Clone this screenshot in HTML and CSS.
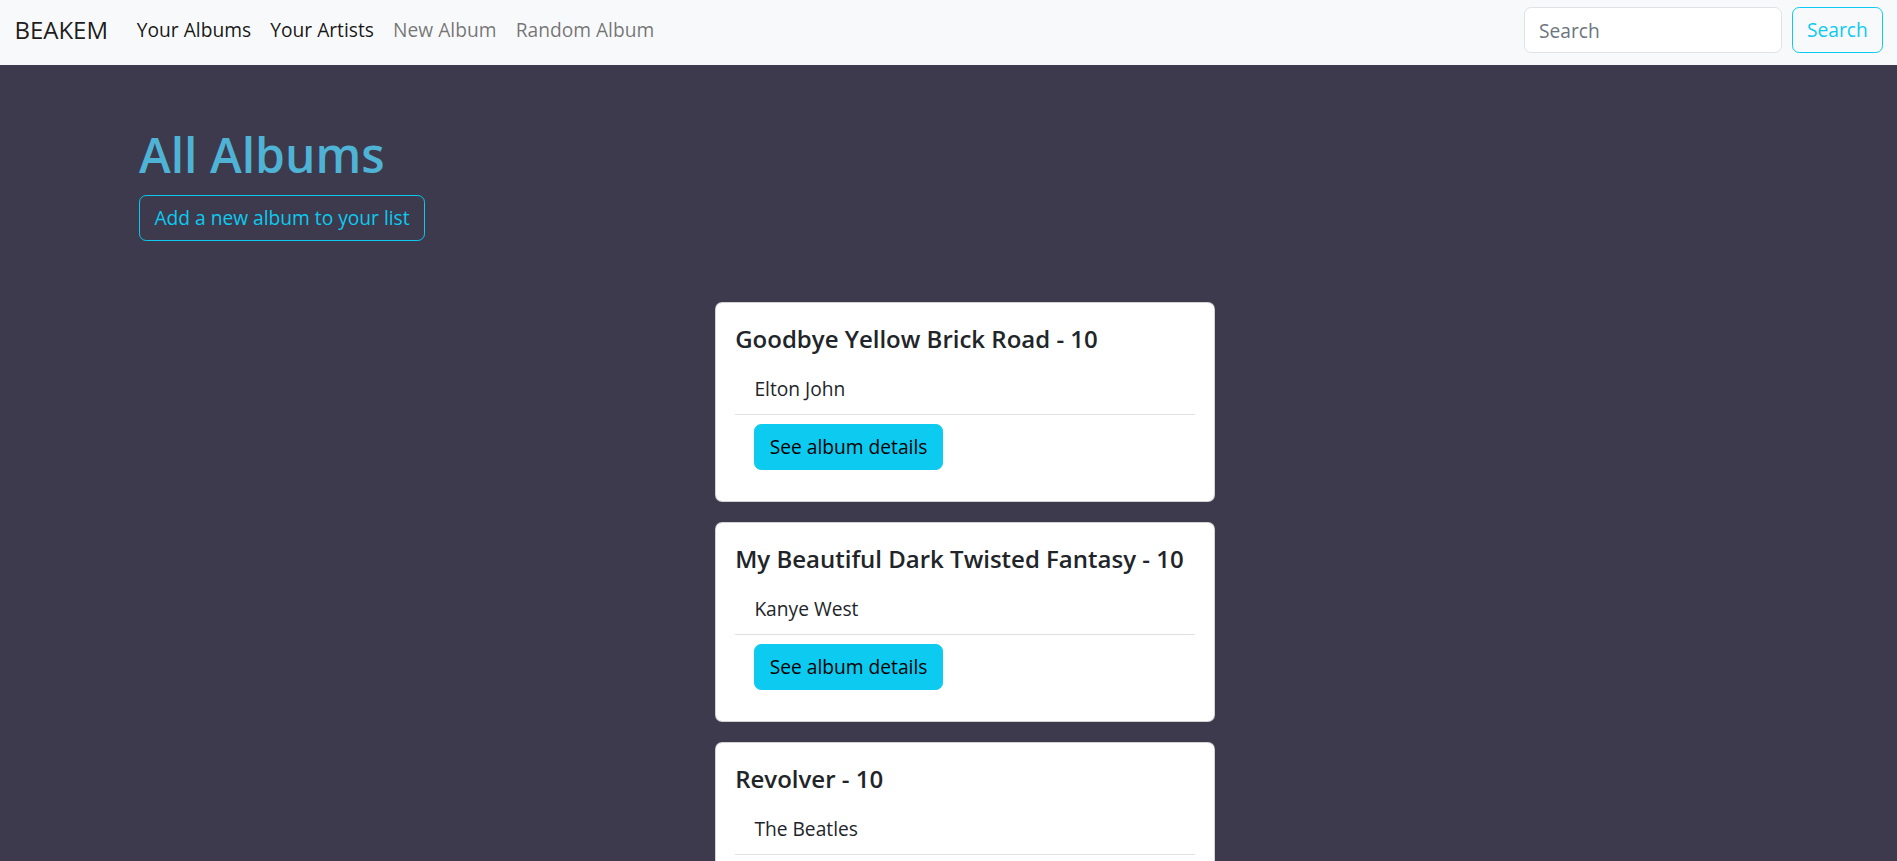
FILE: index.html
```html
<!DOCTYPE html>
<html lang="en">
<head>
<meta charset="utf-8">
<title>BEAKEM</title>
<link rel="stylesheet" href="styles.css">
</head>
<body>
<nav class="navbar">
  <div class="nav-left">
    <a class="brand" href="#">BEAKEM</a>
    <ul class="nav-links">
      <li><a class="nav-link active" href="#">Your Albums</a></li>
      <li><a class="nav-link active" href="#">Your Artists</a></li>
      <li><a class="nav-link" href="#">New Album</a></li>
      <li><a class="nav-link" href="#">Random Album</a></li>
    </ul>
  </div>
  <form class="search-form">
    <input class="search-input" type="search" placeholder="Search">
    <button class="btn-outline-info" type="button">Search</button>
  </form>
</nav>
<main class="page">
  <h1 class="page-title">All Albums</h1>
  <a class="btn-add" href="#">Add a new album to your list</a>
  <section class="album-list">
    <article class="card">
      <h5 class="card-title">Goodbye Yellow Brick Road - 10</h5>
      <ul class="list-group">
        <li class="list-item">Elton John</li>
        <li class="list-item"><a class="btn-info" href="#">See album details</a></li>
      </ul>
    </article>
    <article class="card">
      <h5 class="card-title">My Beautiful Dark Twisted Fantasy - 10</h5>
      <ul class="list-group">
        <li class="list-item">Kanye West</li>
        <li class="list-item"><a class="btn-info" href="#">See album details</a></li>
      </ul>
    </article>
    <article class="card">
      <h5 class="card-title">Revolver - 10</h5>
      <ul class="list-group">
        <li class="list-item">The Beatles</li>
        <li class="list-item"><a class="btn-info" href="#">See album details</a></li>
      </ul>
    </article>
  </section>
</main>
</body>
</html>
```
FILE: styles.css
```css
html, body {
  margin: 0;
  padding: 0;
}
body {
  font-family: "Open Sans", "Noto Sans", sans-serif;
  font-size: 19.2px;
  line-height: 28.8px;
  color: #212529;
  background: #3c3a4c;
  overflow: hidden;
}
a { text-decoration: none; }

.navbar {
  height: 65px;
  box-sizing: border-box;
  background: #f8f9fa;
  padding: 0 14.4px 4.4px;
  display: flex;
  align-items: center;
  justify-content: space-between;
}
.nav-left {
  display: flex;
  align-items: center;
}
.brand {
  font-size: 24px;
  line-height: 36px;
  color: rgba(0, 0, 0, 0.9);
  margin-right: 19.2px;
}
.nav-links {
  list-style: none;
  margin: 0;
  padding: 0;
  display: flex;
}
.nav-link {
  display: block;
  padding: 9.6px 9.6px;
  color: rgba(0, 0, 0, 0.55);
}
.nav-link.active {
  color: rgba(0, 0, 0, 0.92);
}
.search-form {
  display: flex;
  align-items: center;
  gap: 10px;
}
.search-input {
  box-sizing: border-box;
  width: 258px;
  height: 46px;
  padding: 7.2px 14.4px;
  font: inherit;
  font-size: 19.2px;
  color: #212529;
  background: #fff;
  border: 1px solid #dee2e6;
  border-radius: 7.2px;
  outline: none;
}
.search-input::placeholder {
  color: #6c757d;
}
.btn-outline-info {
  box-sizing: border-box;
  width: 91px;
  height: 46px;
  padding: 7.2px 14.4px;
  font: inherit;
  font-size: 19.2px;
  color: #0dcaf0;
  background: transparent;
  border: 1px solid #0dcaf0;
  border-radius: 7.2px;
}

.page {
  padding: 61px 0 0 139px;
}
.page-title {
  margin: 0 0 11px;
  font-size: 48px;
  line-height: 57.6px;
  font-weight: 600;
  color: #4fb3d5;
}
.btn-add {
  display: inline-block;
  box-sizing: border-box;
  height: 46px;
  padding: 8px 14.4px 7.2px;
  color: #0dcaf0;
  border: 1px solid #0dcaf0;
  border-radius: 7.2px;
}
.album-list {
  margin: 61px 0 0 576px;
  width: 500px;
  display: flex;
  flex-direction: column;
  gap: 20px;
}
.card {
  box-sizing: border-box;
  height: 200px;
  background: #fff;
  border: 1px solid rgba(0, 0, 0, 0.175);
  border-radius: 7.2px;
  padding: 22.5px 19.2px 19px;
  flex-shrink: 0;
}
.card-title {
  margin: 0 0 12px;
  font-size: 24px;
  line-height: 28.8px;
  font-weight: 600;
  color: #212529;
}
.list-group {
  list-style: none;
  margin: 0;
  padding: 0;
}
.list-item {
  padding: 9.6px 19.2px;
  border-bottom: 1px solid #dee2e6;
}
.list-item:last-child {
  border-bottom: 0;
}
.btn-info {
  display: inline-block;
  box-sizing: border-box;
  height: 46px;
  padding: 8px 14.4px 7.2px;
  color: #000;
  background: #0dcaf0;
  border: 1px solid #0dcaf0;
  border-radius: 7.2px;
}
```
